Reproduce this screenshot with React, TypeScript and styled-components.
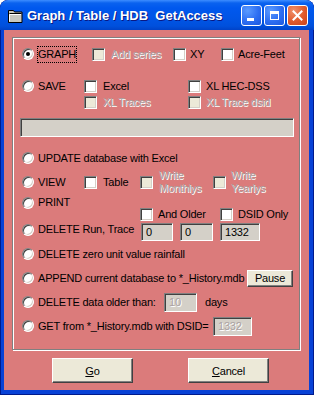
import React from "react"
import styled, { createGlobalStyle, css } from "styled-components"

const GlobalStyle = createGlobalStyle`
  html, body {
    margin: 0;
    padding: 0;
    background: #fff;
  }
  body {
    font-family: "Liberation Sans", Arial, sans-serif;
    font-size: 11px;
    letter-spacing: -0.2px;
    color: #000;
  }
`

const FACE = "#ece9d8"
const GREYFACE = "#d4d0c8"

export default function App() {
  return (
    <>
      <GlobalStyle />
      <Window>
        <TitleBar>
          <TitleIcon width="15" height="14" viewBox="0 0 15 14">
            <path d="M0.5 1.5h5l1 1.5h7.5v10.5h-13.5z" fill="#c8c8c0" stroke="#000" />
            <path d="M1.5 4.5h12" stroke="#000" />
            <path d="M1.5 5.5h11.5M1.5 5.5v7" stroke="#fff" />
          </TitleIcon>
          <Title>Graph / Table / HDB&nbsp; GetAccess</Title>
          <CaptionButtons>
            <CaptionButton>
              <MinGlyph />
            </CaptionButton>
            <CaptionButton>
              <MaxGlyph />
            </CaptionButton>
            <CaptionButton $close>
              <svg width="11" height="11" viewBox="0 0 11 11">
                <path d="M1.5 1.5l8 8M9.5 1.5l-8 8" stroke="#fff" strokeWidth="2" strokeLinecap="square" />
              </svg>
            </CaptionButton>
          </CaptionButtons>
        </TitleBar>

        <Client>
          <GroupBox>
            <Row $h={24} $mt={0}>
              <Lead $w={70}>
                <Radio $on />
                <Label $focus>GRAPH</Label>
              </Lead>
              <Cell $w={81}>
                <Check disabled label="Add series" gap={6} />
              </Cell>
              <Cell $w={48}>
                <Check label="XY" gap={4} />
              </Cell>
              <Check label="Acre-Feet" gap={4} />
            </Row>

            <SaveRow>
              <Lead $w={62} $h={16}>
                <Radio />
                <Label>SAVE</Label>
              </Lead>
              <CheckGrid>
                <Check label="Excel" gap={6} />
                <Check label="XL HEC-DSS" gap={5} />
                <Check disabled label="XL Traces" gap={6} />
                <Check disabled label="XL Trace dsid" gap={5} />
              </CheckGrid>
            </SaveRow>

            <PathField />

            <Row $h={24} $mt={9}>
              <Lead>
                <Radio />
                <Label>UPDATE database with Excel</Label>
              </Lead>
            </Row>

            <Row $h={24}>
              <Lead $w={62}>
                <Radio />
                <Label>VIEW</Label>
              </Lead>
              <Cell $w={56}>
                <Check label="Table" gap={6} />
              </Cell>
              <Cell $w={73}>
                <Check disabled label={"Write\nMonthlys"} gap={6} />
              </Cell>
              <Check disabled label={"Write\nYearlys"} gap={5} />
            </Row>

            <PrintRow>
              <Lead $w={118}>
                <Radio />
                <Label>PRINT</Label>
              </Lead>
              <PrintChecks>
                <Cell $w={80}>
                  <Check label="And Older" gap={5} />
                </Cell>
                <Check label="DSID Only" gap={5} />
              </PrintChecks>
            </PrintRow>

            <Row $h={25}>
              <Lead $w={119}>
                <Radio />
                <Label>DELETE Run, Trace</Label>
              </Lead>
              <RunFields>
                <Field $w={32} $h={18}>0</Field>
                <Field $w={33} $h={18}>0</Field>
                <Field $w={40} $h={18}>1332</Field>
              </RunFields>
            </Row>

            <Row $h={24}>
              <Lead>
                <Radio />
                <Label>DELETE zero unit value rainfall</Label>
              </Lead>
            </Row>

            <Row $h={24}>
              <Lead $w={225}>
                <Radio />
                <Label>APPEND current database to *_History.mdb</Label>
              </Lead>
              <SmallButton>Pause</SmallButton>
            </Row>

            <Row $h={24}>
              <Lead $w={142}>
                <Radio />
                <Label>DELETE data older than:</Label>
              </Lead>
              <Field $w={33} $h={19} $disabled>
                10
              </Field>
              <Unit>days</Unit>
            </Row>

            <Row $h={24}>
              <Lead $w={191}>
                <Radio />
                <Label>GET from *_History.mdb with DSID=</Label>
              </Lead>
              <Field $w={39} $h={19} $disabled>
                1332
              </Field>
            </Row>
          </GroupBox>

          <ButtonBar>
            <DialogButton>
              <u>G</u>o
            </DialogButton>
            <DialogButton>
              <u>C</u>ancel
            </DialogButton>
          </ButtonBar>
        </Client>
      </Window>
    </>
  )
}

type CheckProps = { label: string; disabled?: boolean; gap?: number }

const Check: React.FC<CheckProps> = ({ label, disabled, gap = 5 }) => (
  <CheckWrap $gap={gap}>
    <Box $disabled={disabled} />
    <CheckText $disabled={disabled}>{label}</CheckText>
  </CheckWrap>
)

const Window = styled.div`
  width: 314px;
  height: 395px;
  display: flex;
  flex-direction: column;
  background: #0842d6;
  border-radius: 8px 8px 0 0;
  box-shadow: inset 1px 0 0 #001a8c, inset -1px 0 0 #001a8c, inset 0 -1px 0 #001a8c;
  overflow: hidden;
`

const TitleBar = styled.div`
  height: 30px;
  flex: none;
  display: flex;
  align-items: center;
  padding: 0 6px 0 7px;
  box-sizing: border-box;
  border-radius: 8px 8px 0 0;
  background: linear-gradient(
    to bottom,
    #3d8dff 0px,
    #0a62ef 3px,
    #0058ee 8px,
    #0055e6 18px,
    #0050dc 26px,
    #0042c8 30px
  );
`

const TitleIcon = styled.svg`
  flex: none;
  margin: 1px 4px 0 1px;
`

const Title = styled.span`
  flex: 1;
  font-family: "Liberation Sans", Arial, sans-serif;
  font-weight: bold;
  font-size: 13px;
  letter-spacing: 0;
  color: #fff;
  text-shadow: 1px 1px 0 #0a1883;
  white-space: nowrap;
`

const CaptionButtons = styled.div`
  display: flex;
  gap: 2px;
`

const CaptionButton = styled.div<{ $close?: boolean }>`
  width: 21px;
  height: 21px;
  box-sizing: border-box;
  border: 1px solid #fff;
  border-radius: 3px;
  display: flex;
  align-items: center;
  justify-content: center;
  position: relative;
  background: radial-gradient(circle at 30% 25%, #5b9bff 0%, #2d6ef2 55%, #1c58de 100%);
  ${(p) =>
    p.$close &&
    css`
      background: radial-gradient(circle at 30% 25%, #f0916c 0%, #e05a2c 55%, #c9431c 100%);
    `}
`

const MinGlyph = styled.span`
  position: absolute;
  left: 5px;
  bottom: 4px;
  width: 7px;
  height: 3px;
  background: #fff;
`

const MaxGlyph = styled.span`
  width: 9px;
  height: 9px;
  box-sizing: border-box;
  border: 1px solid #fff;
  border-top-width: 3px;
`

const Client = styled.div`
  flex: 1;
  margin: 0 5px 5px 4px;
  background: #db7b7b;
  padding: 7px 0 0 8px;
  display: flex;
  flex-direction: column;
`

const GroupBox = styled.div`
  width: 288px;
  height: 313px;
  box-sizing: border-box;
  border: 1px solid #808080;
  box-shadow: inset 1px 1px 0 #fff, 1px 1px 0 #fff;
  padding: 4px 0 0 7px;
  display: flex;
  flex-direction: column;
`

const Row = styled.div<{ $h: number; $mt?: number }>`
  height: ${(p) => p.$h}px;
  margin-top: ${(p) => p.$mt ?? 0}px;
  padding-left: 2px;
  display: flex;
  align-items: center;
  flex: none;
`

const SaveRow = styled.div`
  margin-top: 12px;
  padding-left: 2px;
  display: flex;
  align-items: flex-start;
  flex: none;
`

const PrintRow = styled.div`
  height: 23px;
  padding-left: 2px;
  display: flex;
  align-items: flex-start;
  flex: none;
`

const PrintChecks = styled.div`
  display: flex;
  margin-top: 14px;
`

const RunFields = styled.div`
  display: flex;
  gap: 7px;
  align-self: flex-end;
  margin-bottom: 1px;
`

const Lead = styled.div<{ $w?: number; $h?: number }>`
  width: ${(p) => (p.$w ? `${p.$w}px` : "auto")};
  height: ${(p) => (p.$h ? `${p.$h}px` : "auto")};
  display: flex;
  align-items: center;
  flex: none;
  white-space: nowrap;
`

const Cell = styled.div<{ $w: number }>`
  width: ${(p) => p.$w}px;
  flex: none;
  display: flex;
  align-items: center;
`

const CheckGrid = styled.div`
  display: grid;
  grid-template-columns: 104px auto;
  grid-auto-rows: 16px;
  align-items: center;
`

const Radio = styled.span<{ $on?: boolean }>`
  position: relative;
  flex: none;
  width: 12px;
  height: 12px;
  box-sizing: border-box;
  border-radius: 50%;
  background: #fff;
  border: 1px solid;
  border-color: #808080 #fff #fff #808080;
  box-shadow: inset 1px 1px 0 #404040, inset -1px -1px 0 ${GREYFACE};
  ${(p) =>
    p.$on &&
    css`
      &::after {
        content: "";
        position: absolute;
        left: 3px;
        top: 3px;
        width: 4px;
        height: 4px;
        border-radius: 50%;
        background: #000;
      }
    `}
`

const Label = styled.span<{ $focus?: boolean }>`
  margin-left: 3px;
  line-height: 15px;
  border: 1px ${(p) => (p.$focus ? "dotted #000" : "solid transparent")};
  white-space: nowrap;
`

const CheckWrap = styled.div<{ $gap: number }>`
  display: flex;
  align-items: center;
  gap: ${(p) => p.$gap}px;
`

const Box = styled.span<{ $disabled?: boolean }>`
  flex: none;
  width: 13px;
  height: 13px;
  box-sizing: border-box;
  background: ${(p) => (p.$disabled ? FACE : "#fff")};
  border: 1px solid;
  border-color: #808080 #fff #fff #808080;
  box-shadow: inset 1px 1px 0 #404040, inset -1px -1px 0 ${GREYFACE};
`

const disabledText = css`
  color: #aaa2a2;
  text-shadow: 1px 1px 0 #fff;
`

const CheckText = styled.span<{ $disabled?: boolean }>`
  white-space: pre;
  line-height: 13px;
  ${(p) => p.$disabled && disabledText}
`

const PathField = styled.div`
  width: 274px;
  height: 19px;
  margin-top: 8px;
  box-sizing: border-box;
  background: ${GREYFACE};
  border: 1px solid;
  border-color: #808080 #fff #fff #808080;
  box-shadow: inset 1px 1px 0 #404040, inset -1px -1px 0 ${GREYFACE};
  flex: none;
`

const Field = styled.div<{ $w: number; $h: number; $disabled?: boolean }>`
  width: ${(p) => p.$w}px;
  height: ${(p) => p.$h}px;
  box-sizing: border-box;
  padding: 0 0 0 4px;
  display: flex;
  align-items: center;
  background: ${GREYFACE};
  border: 1px solid;
  border-color: #808080 #fff #fff #808080;
  box-shadow: inset 1px 1px 0 #404040, inset -1px -1px 0 ${GREYFACE};
  flex: none;
  ${(p) => p.$disabled && disabledText}
`

const Unit = styled.span`
  margin-left: 8px;
`

const raised = css`
  box-sizing: border-box;
  background: ${FACE};
  border: 1px solid;
  border-color: #fff #404040 #404040 #fff;
  box-shadow: inset -1px -1px 0 #808080;
  display: flex;
  align-items: center;
  justify-content: center;
  font-family: "Liberation Sans", Arial, sans-serif;
  font-size: 11px;
  color: #000;
`

const SmallButton = styled.div`
  ${raised}
  width: 46px;
  height: 17px;
  padding-bottom: 1px;
`

const ButtonBar = styled.div`
  display: flex;
  gap: 55px;
  padding-left: 40px;
  margin-top: 8px;
`

const DialogButton = styled.div`
  ${raised}
  width: 81px;
  height: 25px;
  u {
    text-decoration: underline;
  }
`
